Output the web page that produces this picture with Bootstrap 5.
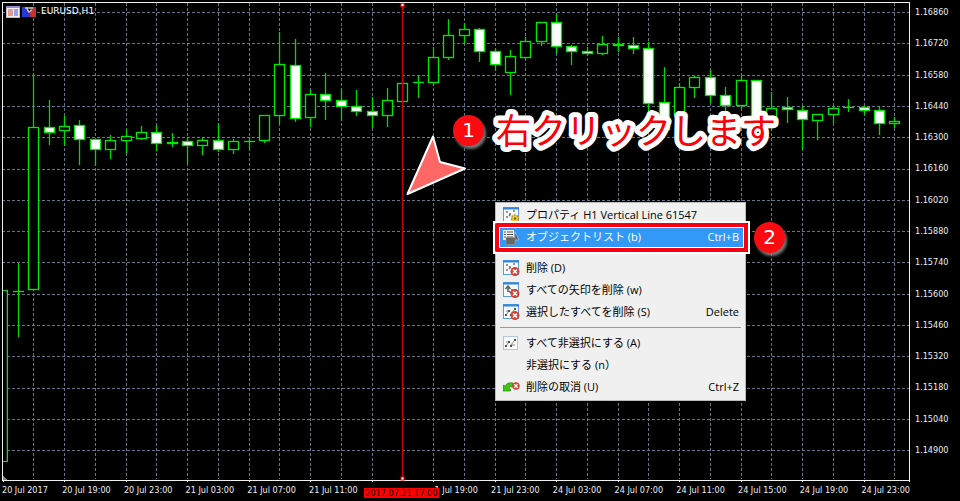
<!DOCTYPE html>
<html lang="ja">
<head>
<meta charset="utf-8">
<meta name="viewport" content="width=device-width, initial-scale=1">
<title>EURUSD,H1</title>
<link href="https://cdn.jsdelivr.net/npm/bootstrap@5.3.0/dist/css/bootstrap.min.css" rel="stylesheet">
<style>
body{background:#000;color:#eee;font-family:"Liberation Sans","Noto Sans CJK JP",sans-serif}
.axis-text{font-family:"DejaVu Sans Condensed","DejaVu Sans",sans-serif;font-size:9px;line-height:12px}
.plot{width:100%;height:auto;display:block}
.price-axis{width:50px;padding:6px 0 26px 5px}
.time-axis{padding:2px 50px 7px 2px}
.time-axis span{flex:0 0 47px;white-space:nowrap}
.cursor-time{left:364px;bottom:5px;width:75px;height:10px;line-height:10px;background:#f00;color:#000;z-index:1}
.chart-title{left:6px;top:6px;height:12px;font-family:"DejaVu Sans",sans-serif;font-size:9px;color:#fff}
.ctx-menu{left:495px;top:202px;width:251px;padding:1px 1px 2px;background:#f0f0f0;border:1px solid #bbb;font-family:"Open Sans","Noto Sans CJK JP",sans-serif;font-size:11px;font-feature-settings:"palt"}
.ctx-item{height:22px;line-height:22px;padding:0 5px 0 6px;border:0;background:none;color:#000;width:100%;white-space:nowrap}
.ctx-item svg{flex:0 0 17px;width:17px;height:16px;margin-right:6px}
.ctx-item.chosen{background:#3399f8;color:#fff}
.ctx-line{margin:4px 3px;border:0;border-top:1px solid #999;opacity:1;height:1px;background:#fff}
.ring{left:493px;top:221px;width:257px;height:33px;border:2px solid #fff}
.ring::after{content:"";display:block;height:100%;border:4px solid #fa0010;border-radius:2px;box-shadow:inset 0 0 0 1px #fff}
.step-dot{width:31px;height:31px;background:#fb0a10;color:#fff;font-family:"DejaVu Sans",sans-serif;font-size:20px;line-height:31px;box-shadow:2px 3px 3px #777}
.step-one{left:453px;top:115px}
.step-two{left:754px;top:222px}
.marks{left:0;top:0;width:100%;pointer-events:none}
.callout{font:400 35px "Noto Sans CJK JP",sans-serif;stroke-linejoin:round}
.callout-edge{fill:#fff;stroke:#fff;stroke-width:10px}
.callout-face{fill:#fa0008}
</style>
<script src="https://cdn.jsdelivr.net/npm/bootstrap@5.3.0/dist/js/bootstrap.bundle.min.js"></script>
</head>
<body>
<svg class="d-none" aria-hidden="true">
  <symbol id="win" viewBox="0 0 17 16"><rect x=".5" y=".5" width="15" height="14" fill="#f8fafd" stroke="#5c9cdc"/><path d="M0 1.500h16" stroke="#2f86dc" stroke-width="2"/></symbol>
  <symbol id="cross" viewBox="0 0 17 16"><circle cx="12" cy="11.500" r="4.500" fill="#d8402e"/><path d="M10 9.500l4 4m0-4l-4 4" stroke="#fff" stroke-width="1.600"/></symbol>
  <symbol id="dots" viewBox="0 0 17 16"><path d="M3 5h2M6 7h2M10 4h2M3 10h2M6 9l2-2" stroke="#777" stroke-width="1.300"/></symbol>
  <symbol id="nodes" viewBox="0 0 17 16"><path d="M3 11l3-4M7 11l5-6M3 7h2M8 10h4" stroke="#888"/><path d="M2 10h2v2H2zM5 6h2v2H5zM11 4h2v2h-2zM7 10h2v2H7z" fill="#555"/></symbol>
</svg>
<main class="position-relative">
  <div class="d-flex">
    <div class="flex-grow-1"><svg class="plot" id="plot" viewBox="0 0 910 482" role="img" aria-label="EURUSD H1 candles"></svg></div>
    <div class="price-axis axis-text d-flex flex-column justify-content-between flex-shrink-0" id="prices"></div>
  </div>
  <div class="time-axis axis-text d-flex justify-content-between position-relative" id="times">
    <div class="cursor-time position-absolute text-center">2017.07.21 17:00</div>
  </div>

  <div class="chart-title position-absolute d-flex align-items-center">
    <svg width="31" height="12" viewBox="0 0 31 12"><rect x=".5" y=".5" width="13" height="11" fill="#f4eef4" stroke="#bbb"/><path d="M0 1h14" stroke="#8e8ed0" stroke-width="2"/><path d="M2 3h5v7H2z" fill="#e59a94"/><path d="M8 3h4v7H8z" fill="#92a2ee"/><path d="M16 1h6v4h2v6h-8z" fill="#2638d8"/><path d="M24 5l1-4h5v10h-6z" fill="#c3352f"/><path d="M19 2h8M21 3l2 3 3-2" stroke="#c9c9c9" stroke-width="1.500" fill="none"/></svg>
    <span class="ms-1">EURUSD,H1</span>
  </div>

  <svg class="marks position-absolute" viewBox="0 0 960 501">
    <path d="M433 136.500L440 162 465 168.500 407.500 194z" fill="#ff6666" stroke="#fff" stroke-width="2" stroke-linejoin="round"/>
    <defs><text id="callout" class="callout" x="496" y="144">右クリックします</text></defs>
    <use href="#callout" class="callout-edge"/>
    <use href="#callout" class="callout-face"/>
  </svg>
  <div class="step-dot step-one position-absolute rounded-circle text-center">1</div>

  <div class="ctx-menu position-absolute" role="menu">
    <button class="ctx-item d-flex align-items-center" role="menuitem"><svg viewBox="0 0 17 16"><use href="#win"/><use href="#dots"/><circle cx="12" cy="11.500" r="3.500" fill="#f0cf40" stroke="#b8922a" stroke-width="1.500" stroke-dasharray="2 1"/><circle cx="12" cy="11.500" r="1.200" fill="#7a6520"/></svg>プロパティ H1 Vertical Line 61547</button>
    <button class="ctx-item chosen d-flex align-items-center" role="menuitem"><svg viewBox="0 0 17 16"><path d="M0 1h11v10H0z" fill="#f4f4f4"/><path d="M1 3h2m1 0h6M1 5.500h2m1 0h6M1 8h2m1 0h6" stroke="#555"/><path d="M12 3l4 8h-5z" fill="#666" stroke="#ccc" stroke-width=".6"/><path d="M3 8.500h9v7H3z" fill="#666" stroke="#999" stroke-width=".6"/></svg>オブジェクトリスト (b)<span class="ms-auto">Ctrl+B</span></button>
    <hr class="ctx-line">
    <button class="ctx-item d-flex align-items-center" role="menuitem"><svg viewBox="0 0 17 16"><use href="#win"/><use href="#dots"/><use href="#cross"/></svg>削除 (D)</button>
    <button class="ctx-item d-flex align-items-center" role="menuitem"><svg viewBox="0 0 17 16"><use href="#win"/><path d="M5 10V5M2.500 7L5 4l2.500 3M6 9l3 3M9 7v4" stroke="#666" stroke-width="1.600" fill="none"/><use href="#cross"/></svg>すべての矢印を削除 (w)</button>
    <button class="ctx-item d-flex align-items-center" role="menuitem"><svg viewBox="0 0 17 16"><use href="#win"/><use href="#nodes"/><use href="#cross"/></svg>選択したすべてを削除 (S)<span class="ms-auto">Delete</span></button>
    <hr class="ctx-line">
    <button class="ctx-item d-flex align-items-center" role="menuitem"><svg viewBox="0 0 17 16"><rect x=".5" y="1.500" width="14" height="13" fill="#fbfcfe" stroke="#b5c4df"/><use href="#nodes"/></svg>すべて非選択にする (A)</button>
    <button class="ctx-item d-flex align-items-center" role="menuitem"><svg viewBox="0 0 17 16"></svg>非選択にする (n）</button>
    <button class="ctx-item d-flex align-items-center" role="menuitem"><svg viewBox="0 0 17 16"><path d="M0 6l2 1q2-4 8-3v4q-3-1-4 1l2 2-1 1H0z" fill="#3fc414" stroke="#2a8d12" stroke-width=".7"/><circle cx="13" cy="7" r="3.700" fill="#d8402e"/><path d="M11.300 5.300l3.400 3.400m0-3.400l-3.400 3.400" stroke="#fff" stroke-width="1.300"/></svg>削除の取消 (U)<span class="ms-auto">Ctrl+Z</span></button>
  </div>
  <div class="ring position-absolute"></div>
  <div class="step-dot step-two position-absolute rounded-circle text-center">2</div>
</main>
<script>
// Each candle: slot, high, body top, body bottom, low, kind (h hollow, w filled, d doji)
const candles = [
[1,263,291,291,336,'d'],[2,74,127,290,290,'h'],[3,100,127,133,144,'w'],[4,116,126,131,145,'h'],[5,120,125,140,164,'w'],[6,139,139,150,165,'w'],[7,135,140,150,158,'h'],[8,129,136,141,152,'h'],[9,126,132,139,139,'h'],[10,125,132,144,150,'w'],[11,133,142,144,146,'h'],[12,137,141,146,162,'w'],[13,137,140,146,154,'h'],[14,123,140,150,151,'w'],[15,139,141,150,153,'h'],[16,137,141,141,149,'d'],[17,115,115,141,142,'h'],[18,32,64,116,123,'h'],[19,39,65,119,121,'w'],[20,89,94,118,126,'h'],[21,73,94,101,119,'w'],[22,89,100,107,120,'w'],[23,90,106,112,115,'w'],[24,97,111,116,127,'w'],[25,88,100,116,126,'h'],[26,82,83,102,102,'h'],[27,75,82,82,97,'d'],[28,47,57,83,85,'h'],[29,19,35,58,59,'h'],[30,23,29,36,43,'h'],[31,28,29,52,61,'w'],[32,48,51,65,70,'w'],[33,50,56,73,94,'h'],[34,37,41,58,59,'h'],[35,22,22,42,45,'h'],[36,14,22,47,53,'w'],[37,45,46,52,64,'w'],[38,47,51,54,55,'w'],[39,36,44,54,54,'h'],[40,37,44,46,51,'w'],[41,37,45,49,53,'w'],[42,42,48,104,110,'w'],[43,67,102,130,135,'w'],[44,83,87,116,118,'h'],[45,76,77,88,97,'h'],[46,70,77,96,102,'w'],[47,87,95,106,111,'w'],[48,76,80,106,108,'h'],[49,80,80,130,132,'w'],[50,92,108,125,130,'h'],[51,97,107,110,122,'w'],[52,106,110,120,148,'w'],[53,114,114,121,139,'h'],[54,106,108,115,122,'h'],[55,99,107,107,111,'d'],[56,106,107,111,114,'w'],[57,106,110,124,134,'w'],[58,117,121,124,127,'h']];
const rowY = k => Math.round(12 + k * 31.3);
const slotX = i => Math.round(2.5 + i * 15.375);
let s = '<g shape-rendering="crispEdges">';
for (let k = 0; k < 15; k++) s += `<path d="M2 ${rowY(k)+.5}H909" stroke="#64768a" stroke-dasharray="3 2"/><path d="M909 ${rowY(k)+.5}h5" stroke="#eee"/>`;
for (let i = 2; i < 59; i += 2) s += `<path d="M${slotX(i)+.5} 3V479" stroke="#64768a" stroke-dasharray="3 2"/>`;
s += '<path d="M2.500 480V2.500H909.500V481.500M2 480.500H910" fill="none" stroke="#f0f0f0"/>';
for (let k = 0; k < 15; k++) s += `<path d="M${Math.round(2.5+k*61.5)+.5} 480v4" stroke="#f0f0f0"/>`;
s += '<path d="M3 476l5 4H3z" fill="#778899"/></g>';
// The oldest candle is cut by the left border
s += '<path d="M3 290h5v172H3z" fill="#00e800"/><path d="M3 291h3.700v170H3z" fill="#000"/>';
for (const [i,hi,t,b,lo,kind] of candles) {
  const x = slotX(i);
  s += `<path d="M${x+.5} ${hi}V${lo+1}" stroke="#00d800" stroke-width="1.300"/>`;
  if (kind === 'd') s += `<path d="M${x-5} ${t+.5}h11" stroke="#00e800" stroke-width="1.300"/>`;
  else s += `<rect x="${x-4.5}" y="${t+.5}" width="10" height="${b-t-1}" fill="${kind==='w'?'#fff':'#000'}" stroke="#00e800" stroke-width="1.300"/>`;
}
s += '<path d="M402.500 5V480" stroke="#c80000" stroke-width="1.500"/><rect x="401" y="3.500" width="3" height="3" fill="#fff" stroke="#f00"/><rect x="401" y="477" width="3" height="3" fill="#fff" stroke="#f00"/>';
document.getElementById('plot').innerHTML = s;
document.getElementById('prices').innerHTML = Array.from({length:15},(_,k)=>`<span>${(1.1686-k*.0014).toFixed(5)}</span>`).join('');
// The cursor's date box takes one slot and the first digit of the next
const times = ['20 Jul 2017','20 Jul 19:00','20 Jul 23:00','21 Jul 03:00','21 Jul 07:00','21 Jul 11:00','','1 Jul 19:00','21 Jul 23:00','24 Jul 03:00','24 Jul 07:00','24 Jul 11:00','24 Jul 15:00','24 Jul 19:00','24 Jul 23:00'];
document.getElementById('times').insertAdjacentHTML('beforeend', times.map((t,k)=>`<span${k===7?' class="text-end"':''}>${t}</span>`).join(''));
</script>
</body>
</html>
